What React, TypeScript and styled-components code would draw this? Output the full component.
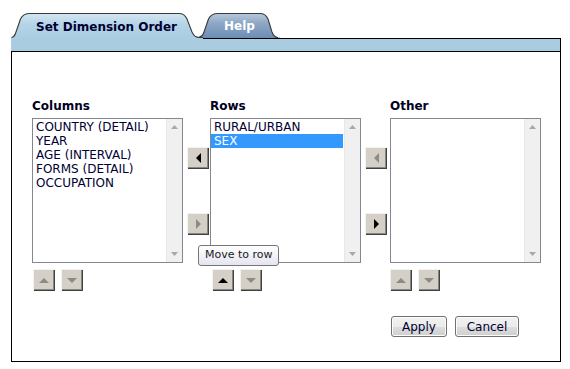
import { FC } from 'react';
import styled, { createGlobalStyle } from 'styled-components';

type Dir = 'left' | 'right' | 'up' | 'down';

const GlobalStyle = createGlobalStyle`
  body {
    margin: 0;
    background: #ffffff;
    font-family: 'DejaVu Sans', Verdana, sans-serif;
    color: #000033;
  }
`;

const Frame = styled.div`
  margin: 12px 0 0 11px;
  width: 550px;
`;

const TabBar = styled.div`
  display: flex;
  height: 26px;
  position: relative;
`;

const Tab = styled.div<{ $width: number; $active?: boolean; $overlap?: number }>`
  position: relative;
  width: ${(p) => p.$width}px;
  height: ${(p) => (p.$active ? 27 : 26)}px;
  margin-left: ${(p) => -(p.$overlap ?? 0)}px;
  z-index: ${(p) => (p.$active ? 2 : 1)};
  display: flex;
  align-items: center;
  box-sizing: border-box;
  padding: 2px 0 0 ${(p) => (p.$active ? 25 : 26)}px;
  font-size: 12px;
  font-weight: bold;
  color: ${(p) => (p.$active ? '#000033' : '#ffffff')};
  svg {
    position: absolute;
    left: 0;
    top: 0;
    z-index: -1;
  }
`;

const BlueBar = styled.div`
  height: 12px;
  background: #a9cce1;
  border-top: 1px solid #000;
  border-bottom: 1px solid #000;
  border-right: 1px solid #000;
`;

const Body = styled.div`
  position: relative;
  height: 310px;
  box-sizing: border-box;
  border: 1px solid #000;
  border-top: none;
  padding: 47px 0 0 20px;
`;

const Lists = styled.div`
  display: flex;
  align-items: flex-start;
`;

const Group = styled.div`
  position: relative;
  display: flex;
  flex-direction: column;
  width: 151px;
`;

const Label = styled.div`
  font-size: 12px;
  font-weight: bold;
  line-height: 14px;
  height: 14px;
  margin-bottom: 5px;
  color: #000022;
`;

const ListBox = styled.div`
  position: relative;
  width: 151px;
  height: 145px;
  box-sizing: border-box;
  border: 1px solid #828790;
  background: #fff;
  padding: 1px 17px 0 0;
`;

const Item = styled.div<{ $selected?: boolean }>`
  font-size: 12px;
  line-height: 14px;
  height: 14px;
  padding-left: 3px;
  white-space: nowrap;
  color: ${(p) => (p.$selected ? '#ffffff' : '#000033')};
  background: ${(p) => (p.$selected ? '#3399ff' : 'transparent')};
`;

const ScrollTrack = styled.div`
  position: absolute;
  top: 0;
  right: 0;
  bottom: 0;
  width: 16px;
  background: #f0f0f0;
  border-left: 1px solid #e8e8e8;
  display: flex;
  flex-direction: column;
  justify-content: space-between;
  align-items: center;
  padding: 6px 0 6px;
  box-sizing: border-box;
`;

const ArrowCol = styled.div<{ $width: number; $pad: number }>`
  width: ${(p) => p.$width}px;
  padding: 29px 0 0 ${(p) => p.$pad}px;
  box-sizing: border-box;
  margin-top: 19px;
  display: flex;
  flex-direction: column;
  gap: 44px;
`;

const UpDownRow = styled.div<{ $inset: number }>`
  display: flex;
  gap: 6px;
  margin: 6px 0 0 ${(p) => p.$inset}px;
`;

const ArrowButton = styled.div`
  width: 22px;
  height: 22px;
  box-sizing: border-box;
  background: #d4d0c8;
  box-shadow: inset 1px 1px #f4f3f0, inset -1px -1px #404040, inset -2px -2px #8a8781;
  display: flex;
  align-items: center;
  justify-content: center;
`;

const Tooltip = styled.div`
  position: absolute;
  left: -12px;
  top: 146px;
  z-index: 3;
  padding: 2px 5px 3px 6px;
  font-size: 11px;
  line-height: 14px;
  color: #1a1a1a;
  border: 1px solid #767676;
  border-radius: 3px;
  background: linear-gradient(#ffffff, #e4e5f0);
  white-space: nowrap;
`;

const Footer = styled.div`
  display: flex;
  gap: 8px;
  margin: 25px 0 0 359px;
`;

const PushButton = styled.button<{ $width: number }>`
  width: ${(p) => p.$width}px;
  height: 21px;
  padding: 0;
  font-family: 'DejaVu Sans', Verdana, sans-serif;
  font-size: 12px;
  color: #000033;
  border: 1px solid #707070;
  border-radius: 3px;
  background: linear-gradient(#f2f2f2 0%, #ebebeb 50%, #dddddd 51%, #cfcfcf 100%);
  box-shadow: inset 0 0 0 1px #fcfcfc;
`;

const Triangle: FC<{ dir: Dir; enabled: boolean }> = ({ dir, enabled }) => {
  const fill = enabled ? '#000000' : '#8d8a85';
  const points: Record<Dir, string> = {
    left: '5,0 5,10 0,5',
    right: '0,0 0,10 5,5',
    up: '0,5 10,5 5,0',
    down: '0,0 10,0 5,5',
  };
  const vertical = dir === 'up' || dir === 'down';
  return (
    <svg width={vertical ? 10 : 5} height={vertical ? 5 : 10} viewBox={vertical ? '0 0 10 5' : '0 0 5 10'}>
      <polygon points={points[dir]} fill={fill} />
    </svg>
  );
};

const ScrollGlyph: FC<{ up?: boolean }> = ({ up }) => (
  <svg width="7" height="4" viewBox="0 0 7 4">
    <polygon points={up ? '0,4 7,4 3.5,0' : '0,0 7,0 3.5,4'} fill="#a8a8a8" />
  </svg>
);

const ActiveTabShape = () => (
  <svg width="192" height="27" viewBox="0 0 192 27">
    <defs>
      <linearGradient id="activeTab" x1="0" y1="0" x2="0" y2="1">
        <stop offset="0" stopColor="#d3e6f1" />
        <stop offset="0.45" stopColor="#b4d3e6" />
        <stop offset="1" stopColor="#a9cce1" />
      </linearGradient>
    </defs>
    <path
      d="M0 27 L0 25.5 Q3.5 25 5 20 L9.5 7 Q12 1.5 19 1.5 L168 1.5 Q173.5 1.5 176 7 L181 20 Q183.5 25.5 188 25.5 L192 25.5 L192 27 Z"
      fill="url(#activeTab)"
    />
    <path
      d="M0.5 25.5 Q3.5 25 5 20 L9.5 7 Q12 1.5 19 1.5 L168 1.5 Q173.5 1.5 176 7 L181 20 Q183.5 25.5 188 25.5 L192 25.5"
      fill="none"
      stroke="#3a3a3a"
      strokeWidth="1.1"
    />
  </svg>
);

const HelpTabShape = () => (
  <svg width="82" height="26" viewBox="0 0 82 26">
    <defs>
      <linearGradient id="helpTab" x1="0" y1="0" x2="0" y2="1">
        <stop offset="0" stopColor="#b7c8dc" />
        <stop offset="0.4" stopColor="#8ea7c5" />
        <stop offset="1" stopColor="#6c8db3" />
      </linearGradient>
    </defs>
    <path
      d="M0 26 Q4.5 25 6 20 L10.5 7 Q13 1.5 20 1.5 L62 1.5 Q67.5 1.5 70 7 L74 20 Q76 25.5 80 25.5 L82 25.5 L82 26 Z"
      fill="url(#helpTab)"
    />
    <path
      d="M0 25.5 Q4.5 25 6 20 L10.5 7 Q13 1.5 20 1.5 L62 1.5 Q67.5 1.5 70 7 L74 20 Q76 25.5 80 25.5"
      fill="none"
      stroke="#3a3a3a"
      strokeWidth="1.1"
    />
  </svg>
);

type ListProps = {
  label: string;
  items: string[];
  selected?: string;
  inset: number;
  upEnabled?: boolean;
  tooltip?: string;
};

const DimensionList: FC<ListProps> = ({ label, items, selected, inset, upEnabled, tooltip }) => (
  <Group>
    <Label>{label}</Label>
    <ListBox>
      {items.map((item) => (
        <Item key={item} $selected={item === selected}>
          {item}
        </Item>
      ))}
      <ScrollTrack>
        <ScrollGlyph up />
        <ScrollGlyph />
      </ScrollTrack>
    </ListBox>
    <UpDownRow $inset={inset}>
      <ArrowButton>
        <Triangle dir="up" enabled={!!upEnabled} />
      </ArrowButton>
      <ArrowButton>
        <Triangle dir="down" enabled={false} />
      </ArrowButton>
    </UpDownRow>
    {tooltip && <Tooltip>{tooltip}</Tooltip>}
  </Group>
);

const App: FC = () => {
  return (
    <>
      <GlobalStyle />
      <Frame>
        <TabBar>
          <Tab $width={192} $active>
            <ActiveTabShape />
            Set Dimension Order
          </Tab>
          <Tab $width={82} $overlap={5}>
            <HelpTabShape />
            Help
          </Tab>
        </TabBar>
        <BlueBar />
        <Body>
          <Lists>
            <DimensionList
              label="Columns"
              items={['COUNTRY (DETAIL)', 'YEAR', 'AGE (INTERVAL)', 'FORMS (DETAIL)', 'OCCUPATION']}
              inset={1}
            />
            <ArrowCol $width={27} $pad={4}>
              <ArrowButton>
                <Triangle dir="left" enabled />
              </ArrowButton>
              <ArrowButton>
                <Triangle dir="right" enabled={false} />
              </ArrowButton>
            </ArrowCol>
            <DimensionList
              label="Rows"
              items={['RURAL/URBAN', 'SEX']}
              selected="SEX"
              inset={2}
              upEnabled
              tooltip="Move to row"
            />
            <ArrowCol $width={29} $pad={4}>
              <ArrowButton>
                <Triangle dir="left" enabled={false} />
              </ArrowButton>
              <ArrowButton>
                <Triangle dir="right" enabled />
              </ArrowButton>
            </ArrowCol>
            <DimensionList label="Other" items={[]} inset={0} />
          </Lists>
          <Footer>
            <PushButton $width={56}>Apply</PushButton>
            <PushButton $width={64}>Cancel</PushButton>
          </Footer>
        </Body>
      </Frame>
    </>
  );
};

export default App;
